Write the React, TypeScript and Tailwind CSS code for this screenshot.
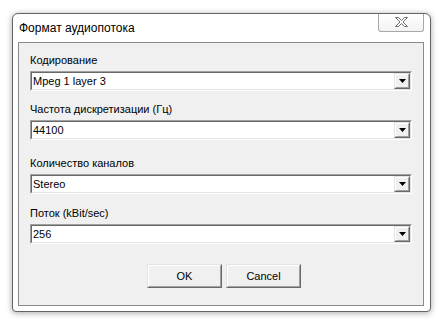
import React from "react";

const font = { fontFamily: '"Liberation Sans", Arial, sans-serif' };

function Combo({ value }: { value: string }) {
  return (
    <div className="h-[20px] w-full border border-t-[#a0a0a0] border-l-[#a0a0a0] border-r-white border-b-white">
      <div className="flex h-full w-full border border-t-[#696969] border-l-[#696969] border-r-[#e3e3e3] border-b-[#e3e3e3] bg-white">
        <div className="flex flex-1 items-center pl-[1px] text-[11px] leading-[13px] text-black">{value}</div>
        <div className="h-full w-[16px] border border-t-[#e3e3e3] border-l-[#e3e3e3] border-r-[#696969] border-b-[#696969]">
          <div className="flex h-full w-full items-center justify-center border border-t-white border-l-white border-r-[#a0a0a0] border-b-[#a0a0a0] bg-[#f0f0f0]">
            <svg width="7" height="4" viewBox="0 0 7 4">
              <path d="M0 0H7L3.5 4Z" fill="#000" />
            </svg>
          </div>
        </div>
      </div>
    </div>
  );
}

function Btn({ label }: { label: string }) {
  return (
    <div className="h-[24px] w-[75px] border border-t-[#e3e3e3] border-l-[#e3e3e3] border-r-[#696969] border-b-[#696969]">
      <div className="flex h-full w-full items-center justify-center border border-t-white border-l-white border-r-[#a0a0a0] border-b-[#a0a0a0] bg-[#f0f0f0] text-[11px] text-black">
        {label}
      </div>
    </div>
  );
}

export default function App() {
  return (
    <div className="h-[322px] w-[443px] bg-white pl-[12px] pt-[13px]" style={font}>
      <div className="relative flex h-[299px] w-[419px] flex-col rounded-t-[6px] rounded-b-[4px] border border-[#646464] bg-white shadow-[0_1px_6px_rgba(0,0,0,0.35)]">
        <div className="flex h-[28px] items-center pl-[6px] text-[12px] text-black">Формат аудиопотока</div>
        <div className="absolute right-[6px] top-0 flex h-[18px] w-[46px] items-start justify-center rounded-b-[3px] border border-t-0 border-[#a8a8a8] bg-gradient-to-b from-white to-[#f2f2f2] pt-[3px]">
          <svg width="13" height="10" viewBox="0 0 13 10">
            <path
              d="M0.5 0.5H3.5L6.5 3.5L9.5 0.5H12.5L8 5L12.5 9.5H9.5L6.5 6.5L3.5 9.5H0.5L5 5Z"
              fill="#fafafa"
              stroke="#6d6d6d"
              strokeWidth="1"
            />
          </svg>
        </div>
        <div className="ml-[5px] flex h-[264px] w-[406px] flex-col border border-[#8a8a8a] bg-[#f0f0f0] px-[11px]">
          <div className="mt-[11px] h-[13px] text-[11px] leading-[13px] text-black">Кодирование</div>
          <div className="mt-[4px]"><Combo value="Mpeg 1 layer 3" /></div>
          <div className="mt-[12px] h-[13px] text-[11px] leading-[13px] text-black">Частота дискретизации (Гц)</div>
          <div className="mt-[4px]"><Combo value="44100" /></div>
          <div className="mt-[17px] h-[13px] text-[11px] leading-[13px] text-black">Количество каналов</div>
          <div className="mt-[4px]"><Combo value="Stereo" /></div>
          <div className="mt-[13px] h-[13px] text-[11px] leading-[13px] text-black">Поток (kBit/sec)</div>
          <div className="mt-[4px]"><Combo value="256" /></div>
          <div className="mt-[20px] flex gap-[4px] pl-[117px]">
            <Btn label="OK" />
            <Btn label="Cancel" />
          </div>
        </div>
      </div>
    </div>
  );
}
